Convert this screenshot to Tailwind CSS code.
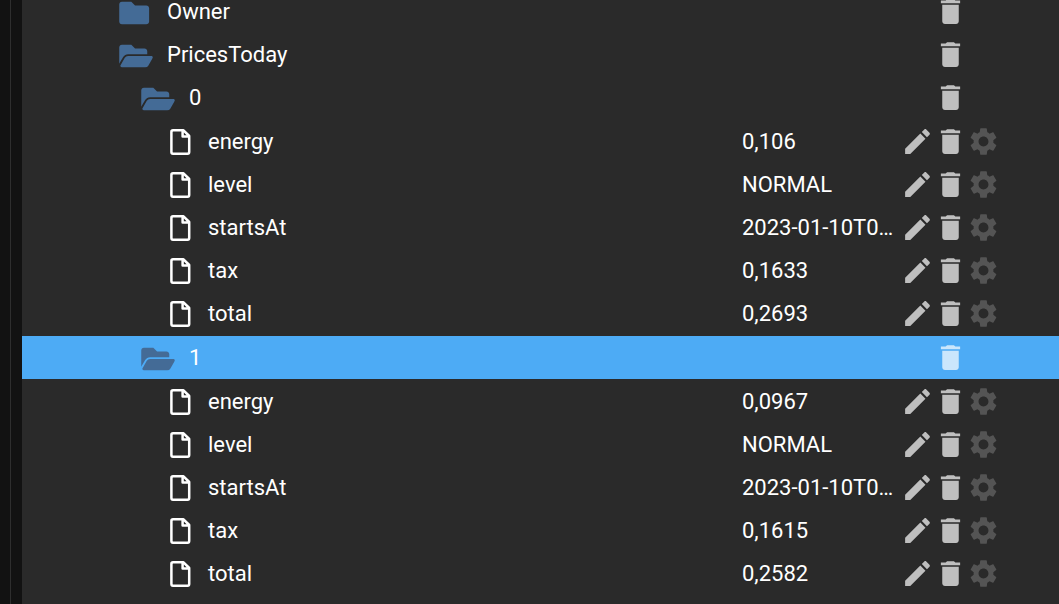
<!DOCTYPE html>
<html lang="en">
<head>
  <meta charset="UTF-8" />
  <meta name="viewport" content="width=device-width, initial-scale=1.0" />
  <title>Objects</title>
  <script src="https://cdn.jsdelivr.net/npm/@tailwindcss/browser@4"></script>
  <script defer>
    document.addEventListener("DOMContentLoaded", () => {
      const tree = document.getElementById("tree");

      const nodes = [
        { name: "Owner", level: 0 },
        { name: "PricesToday", level: 0, open: true },
        { name: "0", level: 1, open: true, states: [
          ["energy", "0,106"],
          ["level", "NORMAL"],
          ["startsAt", "2023-01-10T00:00:00.000+01:00"],
          ["tax", "0,1633"],
          ["total", "0,2693"],
        ] },
        { name: "1", level: 1, open: true, selected: true, states: [
          ["energy", "0,0967"],
          ["level", "NORMAL"],
          ["startsAt", "2023-01-10T01:00:00.000+01:00"],
          ["tax", "0,1615"],
          ["total", "0,2582"],
        ] },
      ];

      const indents = ["pl-[97px]", "pl-[119px]"];

      function button(icon, label, color) {
        return `<button type="button" aria-label="${label}" class="w-[33px] h-[33px] ${color}"><svg class="w-full h-full" viewBox="0 0 24 24" fill="currentColor"><use href="#${icon}" /></svg></button>`;
      }

      function folderRow(node) {
        return `
          <div class="flex items-center h-[43px] pr-[59px] ${indents[node.level]} ${node.selected ? "bg-[#4dabf5]" : ""}">
            <svg class="w-[34px] h-[30px] mt-0.5 shrink-0 text-[#446b96]" viewBox="0 0 576 512" fill="currentColor"><use href="#${node.open ? "folder-open" : "folder"}" /></svg>
            <span class="flex-1 truncate pl-[14px]">${node.name}</span>
            <div class="flex w-[99px] justify-center">${button("trash", "Delete " + node.name, "text-white/70")}</div>
          </div>`;
      }

      function stateRow([name, value]) {
        return `
          <li class="flex items-center h-[43px] pl-[141px] pr-[59px]">
            <svg class="w-[34px] h-[26px] shrink-0" viewBox="0 0 34 26"><use href="#file" /></svg>
            <span class="flex-1 truncate pl-[11px]">${name}</span>
            <span class="w-[159px] truncate pr-1">${value}</span>
            <div class="flex w-[99px]">
              ${button("pencil", "Edit " + name, "text-white/70")}
              ${button("trash", "Delete " + name, "text-white/70")}
              ${button("gear", "Settings of " + name, "text-white/20")}
            </div>
          </li>`;
      }

      tree.innerHTML = nodes.map((node) => `
        <li>
          ${folderRow(node)}
          ${node.states ? `<ul class="py-px">${node.states.map(stateRow).join("")}</ul>` : ""}
        </li>`).join("");
    });
  </script>
</head>
<body class="flex h-screen overflow-hidden bg-[#121212] text-white text-[22px] font-['Roboto',sans-serif]">
  <svg class="hidden">
    <symbol id="folder" viewBox="0 0 576 512"><path d="M464 128H272l-64-64H48C21.49 64 0 85.49 0 112v288c0 26.51 21.49 48 48 48h416c26.51 0 48-21.49 48-48V176c0-26.51-21.49-48-48-48z" /></symbol>
    <symbol id="folder-open" viewBox="0 0 576 512"><path d="M572.694 292.093L500.27 416.248A63.997 63.997 0 0 1 444.989 448H45.025c-18.523 0-30.064-20.093-20.731-36.093l72.424-124.155A64 64 0 0 1 152 256h399.964c18.523 0 30.064 20.093 20.73 36.093zM152 224h328v-48c0-26.51-21.49-48-48-48H272l-64-64H48C21.49 64 0 85.49 0 112v278.046l69.077-118.418C86.214 242.25 117.989 224 152 224z" /></symbol>
    <symbol id="file" viewBox="0 0 34 26"><path d="M10 1.300h10.500L26.200 7V23.100q0 1.600-1.600 1.600H10q-1.600 0-1.600-1.600V2.900q0-1.600 1.600-1.600zM19.600 1.500V7.600H26" fill="none" stroke="#fff" stroke-width="2.5" stroke-linejoin="round" /></symbol>
    <symbol id="pencil" viewBox="0 0 24 24"><path d="M3 17.25V21h3.75L17.81 9.94l-3.75-3.75L3 17.25zM20.71 7.04c.39-.39.39-1.02 0-1.41l-2.34-2.34c-.39-.39-1.02-.39-1.41 0l-1.83 1.83 3.75 3.75 1.83-1.83z" /></symbol>
    <symbol id="trash" viewBox="0 0 24 24"><path d="M6 19c0 1.100.9 2 2 2h8c1.100 0 2-.9 2-2V7H6v12zM19 4h-3.500l-1-1h-5l-1 1H5v2h14V4z" /></symbol>
    <symbol id="gear" viewBox="0 0 24 24"><path d="M19.140 12.940c.04-.3.06-.61.06-.94 0-.32-.02-.64-.07-.94l2.030-1.580c.18-.14.23-.41.12-.61l-1.920-3.320c-.12-.22-.37-.29-.59-.22l-2.390.96c-.5-.38-1.030-.7-1.620-.94l-.36-2.540c-.04-.24-.24-.41-.48-.41h-3.840c-.24 0-.43.17-.47.41l-.36 2.540c-.59.24-1.130.57-1.620.94l-2.390-.96c-.22-.08-.47 0-.59.22L2.740 8.870c-.12.21-.08.47.12.61l2.030 1.580c-.05.3-.09.63-.09.94s.02.64.07.94l-2.030 1.580c-.18.14-.23.41-.12.61l1.920 3.320c.12.22.37.29.59.22l2.390-.96c.5.38 1.030.7 1.620.94l.36 2.540c.05.24.24.41.48.41h3.840c.24 0 .44-.17.47-.41l.36-2.540c.59-.24 1.130-.56 1.620-.94l2.390.96c.22.08.47 0 .59-.22l1.920-3.320c.12-.22.07-.47-.12-.61l-2.010-1.580zM12 15.600c-1.980 0-3.600-1.620-3.600-3.600s1.620-3.600 3.600-3.600 3.600 1.620 3.600 3.600-1.620 3.600-3.600 3.600z" /></symbol>
  </svg>

  <div class="w-[11px] shrink-0 border-r border-[#2e2e2e]"></div>
  <main class="flex-1 min-w-0 ml-[11px] bg-[#2a2a2a]">
    <ul id="tree" class="-mt-[10px]"></ul>
  </main>
</body>
</html>
